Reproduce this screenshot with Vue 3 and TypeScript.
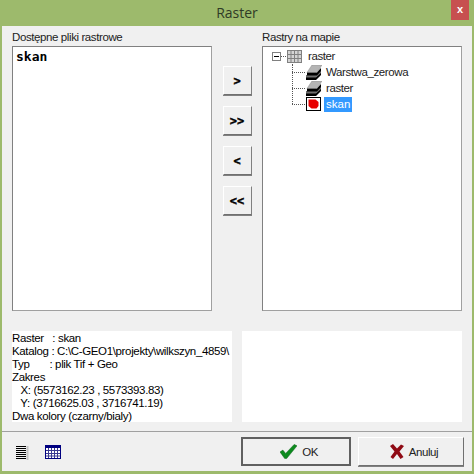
<script setup lang="ts">
const moveButtons = ['>', '>>', '<', '<<']

const infoLines = [
  'Raster   : skan',
  'Katalog : C:\\C-GEO1\\projekty\\wilkszyn_4859\\',
  'Typ       : plik Tif + Geo',
  'Zakres',
  '   X: (5573162.23 , 5573393.83)',
  '   Y: (3716625.03 , 3716741.19)',
  'Dwa kolory (czarny/bialy)',
]

const layerNames = ['Warstwa_zerowa', 'raster']
</script>

<template>
  <div class="window">
    <div class="titlebar">
      <span class="title">Raster</span>
      <div class="close">x</div>
    </div>
    <div class="dialog">
      <div class="lists">
        <div class="col">
          <div class="label">Dostępne pliki rastrowe</div>
          <div class="listbox">
            <div class="file">skan</div>
          </div>
        </div>
        <div class="moves">
          <button v-for="b in moveButtons" :key="b" class="move">{{ b }}</button>
        </div>
        <div class="col">
          <div class="label">Rastry na mapie</div>
          <div class="listbox tree">
            <div class="node root">
              <span class="expander"></span>
              <span class="dots-h short"></span>
              <svg class="grid-icon" width="15" height="13" viewBox="0 0 15 13">
                <rect x="0.5" y="0.5" width="14" height="12" fill="#d4d4d4" stroke="#808080" />
                <path d="M4 1v11M7.5 1v11M11 1v11M1 4.500h13M1 8.500h13" stroke="#808080" fill="none" />
              </svg>
              <span class="node-text root-text">raster</span>
            </div>
            <div class="children">
              <div v-for="name in layerNames" :key="name" class="node">
                <span class="dots-h"></span>
                <svg class="layers" width="16" height="15" viewBox="0 0 16 15">
                  <path d="M0 12h10l5-5v3l-5 5H0z" fill="#000" />
                  <path d="M0 10h10l5-5v3l-5 4.500H0z" fill="#6f6f6f" />
                  <path d="M1 7h10l4-4v3l-4 4.500H1z" fill="#000" />
                  <path d="M6 0h10l-5 7.500H1z" fill="#b4b4b4" stroke="#8a8a8a" stroke-width="0.5" />
                </svg>
                <span class="node-text">{{ name }}</span>
              </div>
              <div class="node">
                <span class="dots-h"></span>
                <svg class="layers" width="15" height="14" viewBox="0 0 15 14">
                  <rect x="0.500" y="0.500" width="14" height="13" fill="#fff" stroke="#000" />
                  <path d="M2.500 2.500h7l3 2.500v4l-2 2.500H5.500L2.500 9z" fill="#e80000" />
                </svg>
                <span class="node-text selected">skan</span>
              </div>
            </div>
          </div>
        </div>
      </div>
      <div class="info-row">
        <div class="info">
          <div v-for="line in infoLines" :key="line" class="info-line">{{ line }}</div>
        </div>
        <div class="info"></div>
      </div>
      <div class="footer">
        <div class="tools">
          <svg width="13" height="15" viewBox="0 0 13 15">
            <path d="M0 1.500h10M0 3.500h10M0 5.500h10M0 7.500h10M0 9.500h10M0 11.500h10M0 13.500h10" stroke="#000" fill="none" />
            <path d="M11.500 1v14" stroke="#c4c4c4" stroke-width="2" fill="none" />
          </svg>
          <svg width="16" height="14" viewBox="0 0 16 14">
            <rect x="0.500" y="0.500" width="15" height="13" fill="#fff" stroke="#000080" />
            <rect x="0" y="0" width="16" height="3" fill="#000080" />
            <path d="M3.500 3v10M6.500 3v10M9.500 3v10M12.500 3v10M1 5.500h14M1 8.500h14M1 11h14" stroke="#3a3a90" fill="none" />
          </svg>
        </div>
        <div class="actions">
          <button class="action ok">
            <svg width="17" height="15" viewBox="0 0 18 15">
              <path d="M0 8 3 6l3 3.500L15 0l3 1.500L7 15H5z" fill="#0c8a1e" stroke="#055c12" stroke-width="0.5" />
            </svg>
            <span>OK</span>
          </button>
          <button class="action cancel">
            <svg width="14" height="15" viewBox="0 0 14 15">
              <path d="M0 2 3 0l4 4.500L11 .500 14 2 9.500 7.500 13.500 13 10.500 15 7 10 3 15 .500 13 4.500 7.500z" fill="#8f0a14" />
            </svg>
            <span>Anuluj</span>
          </button>
        </div>
      </div>
    </div>
  </div>
</template>

<style scoped>
.window {
  width: 474px;
  height: 474px;
  box-sizing: border-box;
  background: #9dba6c;
  padding: 0 2px 3px;
  display: flex;
  flex-direction: column;
  font-family: 'Liberation Sans', Arial, sans-serif;
  font-size: 11.500px;
  color: #000;
}

.titlebar {
  height: 26px;
  flex: none;
  position: relative;
  text-align: center;
}

.title {
  font-family: 'Open Sans', sans-serif;
  font-size: 14px;
  line-height: 26px;
  color: #2f3a26;
}

.close {
  position: absolute;
  right: 3px;
  top: 0;
  width: 18px;
  height: 20px;
  background: #c75050;
  color: #fff;
  font-weight: bold;
  font-size: 11px;
  line-height: 18px;
  text-align: center;
}

.dialog {
  flex: 1;
  background: #f0f0f0;
  display: flex;
  flex-direction: column;
  padding: 0 10px;
}

.lists {
  display: flex;
  height: 285px;
  flex: none;
}

.col {
  width: 200px;
  flex: none;
}

.label {
  height: 20px;
  line-height: 22px;
  letter-spacing: -0.4px;
  color: #222;
}

.listbox {
  box-sizing: border-box;
  height: 265px;
  background: #fff;
  border: 1px solid #808080;
  border-right-color: #a0a0a0;
  border-bottom-color: #a0a0a0;
}

.file {
  font-family: 'DejaVu Sans Mono', monospace;
  font-weight: bold;
  font-size: 13px;
  line-height: 20px;
  padding-left: 3px;
}

.moves {
  width: 50px;
  flex: none;
  display: flex;
  flex-direction: column;
  align-items: center;
  gap: 11px;
  padding-top: 40px;
}

.move {
  width: 29px;
  height: 29px;
  padding: 0;
  background: #f0f0f0;
  border: 1px solid;
  border-color: #fff #808080 #707070 #fff;
  box-shadow: 0 1px 0 #808080;
  font-family: 'DejaVu Sans Mono', monospace;
  font-weight: bold;
  font-size: 12px;
  line-height: 1;
  color: #000;
  -webkit-text-stroke: 0.4px #000;
}

.tree {
  padding: 1px 0 0 9px;
}

.node {
  height: 16px;
  display: flex;
  align-items: center;
  position: relative;
}

.expander {
  width: 9px;
  height: 9px;
  box-sizing: border-box;
  border: 1px solid #808080;
  background: linear-gradient(#000, #000) center / 5px 1px no-repeat #fff;
  flex: none;
}

.dots-h {
  width: 13px;
  border-top: 1px dotted #555;
  flex: none;
  margin-right: 1px;
}

.dots-h.short {
  width: 5px;
}

.root-text {
  margin-left: 4px;
}

.children {
  margin-left: 20px;
  border-left: 1px dotted #555;
  height: 40px;
}

.children .node {
  margin-left: -1px;
}

.layers {
  flex: none;
  margin-right: 2px;
}

.node-text {
  line-height: 15px;
  color: #222;
  padding: 0 2px;
  letter-spacing: -0.4px;
}

.selected {
  background: #3399ff;
  color: #fff;
  margin-left: 1px;
  letter-spacing: 0;
}

.info-row {
  display: flex;
  gap: 10px;
  margin-top: 20px;
  height: 91px;
  flex: none;
}

.info {
  flex: none;
  width: 220px;
  background: #fff;
  overflow: hidden;
  line-height: 13px;
  padding-top: 1px;
  box-sizing: border-box;
}

.info-line {
  white-space: pre;
  letter-spacing: -0.35px;
}

.footer {
  margin: 9px -10px 0;
  border-top: 1px solid #a0a0a0;
  flex: 1;
  display: flex;
  justify-content: space-between;
  padding: 5px 8px 0 14px;
}

.tools {
  display: flex;
  gap: 16px;
  align-items: flex-start;
  padding-top: 8px;
}

.actions {
  display: flex;
  gap: 7px;
}

.action {
  height: 29px;
  padding: 0;
  background: #f0f0f0;
  border: 1px solid;
  border-color: #fff #707070 #707070 #fff;
  display: flex;
  align-items: center;
  justify-content: center;
  gap: 5px;
  font-family: 'Liberation Sans', Arial, sans-serif;
  font-size: 11.500px;
  color: #222;
}

.ok {
  width: 110px;
  border: 2px solid #606060;
  box-sizing: border-box;
  padding-left: 6px;
  letter-spacing: -0.5px;
}

.cancel {
  width: 106px;
  box-shadow: 0 1px 0 #808080;
  padding-left: 6px;
  letter-spacing: -0.4px;
}
</style>
